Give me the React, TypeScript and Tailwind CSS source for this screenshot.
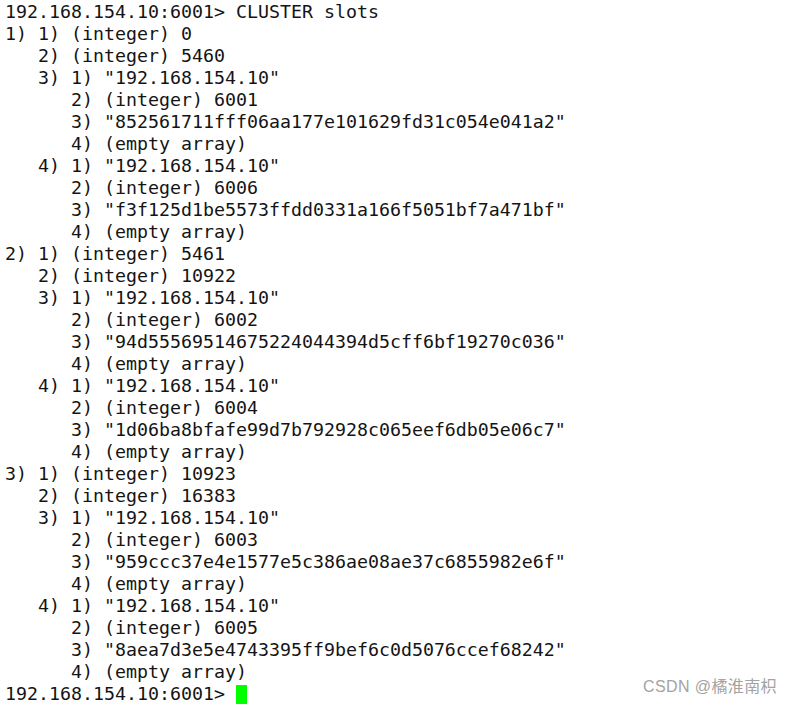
const lines: string[] = [
  '192.168.154.10:6001> CLUSTER slots',
  '1) 1) (integer) 0',
  '   2) (integer) 5460',
  '   3) 1) "192.168.154.10"',
  '      2) (integer) 6001',
  '      3) "852561711fff06aa177e101629fd31c054e041a2"',
  '      4) (empty array)',
  '   4) 1) "192.168.154.10"',
  '      2) (integer) 6006',
  '      3) "f3f125d1be5573ffdd0331a166f5051bf7a471bf"',
  '      4) (empty array)',
  '2) 1) (integer) 5461',
  '   2) (integer) 10922',
  '   3) 1) "192.168.154.10"',
  '      2) (integer) 6002',
  '      3) "94d55569514675224044394d5cff6bf19270c036"',
  '      4) (empty array)',
  '   4) 1) "192.168.154.10"',
  '      2) (integer) 6004',
  '      3) "1d06ba8bfafe99d7b792928c065eef6db05e06c7"',
  '      4) (empty array)',
  '3) 1) (integer) 10923',
  '   2) (integer) 16383',
  '   3) 1) "192.168.154.10"',
  '      2) (integer) 6003',
  '      3) "959ccc37e4e1577e5c386ae08ae37c6855982e6f"',
  '      4) (empty array)',
  '   4) 1) "192.168.154.10"',
  '      2) (integer) 6005',
  '      3) "8aea7d3e5e4743395ff9bef6c0d5076ccef68242"',
  '      4) (empty array)',
];

export default function App() {
  return (
    <div className="relative w-[793px] h-[706px] bg-white overflow-hidden">
      <div className="pl-[5px] pt-px font-['DejaVu_Sans_Mono',monospace] text-[18.27px] leading-[22px] text-[#141414] whitespace-pre">
        {lines.map((l, i) => (
          <div key={i}>{l}</div>
        ))}
        <div className="flex items-center">
          <span>192.168.154.10:6001&gt; </span>
          <span className="inline-block w-[11px] h-[19px] bg-[#00ff00]" />
        </div>
      </div>
      {/* watermark */}
      <div className="absolute right-[16px] bottom-[9px] font-['Liberation_Sans','Noto_Sans_CJK_SC',sans-serif] text-[16px] leading-[20px] tracking-[0.4px] text-[#a3a3a3]">
        CSDN @橘淮南枳
      </div>
    </div>
  );
}
